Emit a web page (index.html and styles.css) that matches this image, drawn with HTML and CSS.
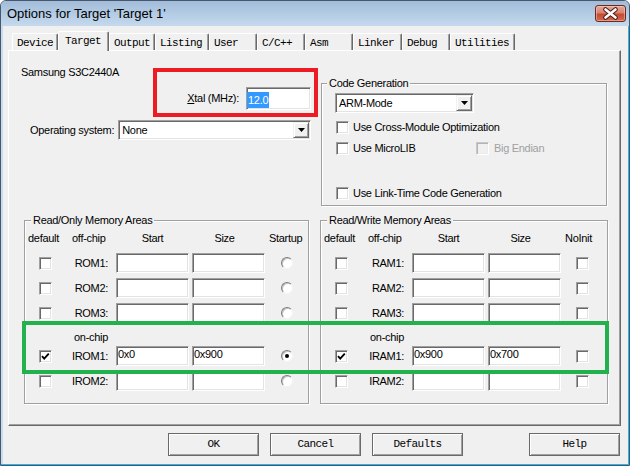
FILE: index.html
```html
<!DOCTYPE html>
<html>
<head>
<meta charset="utf-8">
<title>Options for Target</title>
<link rel="stylesheet" href="styles.css">
</head>
<body>
<div class="window">
  <div class="titlebar">
    <span class="title">Options for Target 'Target 1'</span>
    <div class="close">
      <svg width="29" height="15" viewBox="0 0 29 15">
        <path d="M9.5 3.5L19.5 11.5M19.5 3.5L9.5 11.5" stroke="#4a1a12" stroke-width="4.6" stroke-linecap="round" fill="none"/>
        <path d="M9.5 3.5L19.5 11.5M19.5 3.5L9.5 11.5" stroke="#ffffff" stroke-width="2.6" stroke-linecap="round" fill="none"/>
      </svg>
    </div>
  </div>

  <div class="tabs">
    <div class="tab w-device">Device</div>
    <div class="tab sel w-target">Target</div>
    <div class="tab w-output">Output</div>
    <div class="tab w-listing">Listing</div>
    <div class="tab w-user">User</div>
    <div class="tab w-cc">C/C++</div>
    <div class="tab w-asm">Asm</div>
    <div class="tab w-linker">Linker</div>
    <div class="tab w-debug">Debug</div>
    <div class="tab w-util">Utilities</div>
  </div>

  <div class="panel">
    <div class="top">
      <div class="left-col">
        <div class="devname">Samsung S3C2440A</div>
        <div class="xtal-row">
          <span class="xtal-lbl"><u>X</u>tal (MHz):</span>
          <div class="edit xtal"><span class="hl">12.0</span></div>
        </div>
        <div class="os-row">
          <span class="os-lbl">Operating system:</span>
          <div class="combo os">
            <span class="combo-text">None</span>
            <span class="drop"><svg width="7" height="4" viewBox="0 0 7 4"><polygon points="0,0 7,0 3.5,4" fill="#000"/></svg></span>
          </div>
        </div>
      </div>

      <fieldset class="group codegen">
        <legend>Code Generation</legend>
        <div class="cg-body">
          <div class="combo arm">
            <span class="combo-text">ARM-Mode</span>
            <span class="drop"><svg width="7" height="4" viewBox="0 0 7 4"><polygon points="0,0 7,0 3.5,4" fill="#000"/></svg></span>
          </div>
          <div class="cb-row first">
            <span class="cb"><span class="chk"></span>Use Cross-Module Optimization</span>
          </div>
          <div class="cb-row">
            <span class="cb micro"><span class="chk"></span>Use MicroLIB</span>
            <span class="cb dis"><span class="chk off"></span>Big Endian</span>
          </div>
          <div class="cb-row last">
            <span class="cb"><span class="chk"></span>Use Link-Time Code Generation</span>
          </div>
        </div>
      </fieldset>
    </div>

    <div class="mem">
      <fieldset class="group memgrp ro">
        <legend>Read/Only Memory Areas</legend>
        <div class="mem-grid">
          <div class="hd h-def">default</div>
          <div class="hd h-off">off-chip</div>
          <div class="hd h-start">Start</div>
          <div class="hd h-size">Size</div>
          <div class="hd h-last">Startup</div>

          <span class="chk cell-chk"></span>
          <div class="rlbl">ROM1:</div>
          <div class="edit mem-edit"></div>
          <div class="edit mem-edit"></div>
          <span class="radio"></span>

          <span class="chk cell-chk"></span>
          <div class="rlbl">ROM2:</div>
          <div class="edit mem-edit"></div>
          <div class="edit mem-edit"></div>
          <span class="radio"></span>

          <span class="chk cell-chk"></span>
          <div class="rlbl">ROM3:</div>
          <div class="edit mem-edit"></div>
          <div class="edit mem-edit"></div>
          <span class="radio"></span>

          <div class="onchip">on-chip</div>

          <span class="chk cell-chk"><svg width="11" height="11" viewBox="0 0 11 11"><path d="M2 5.2L4.2 7.6L8.8 2.6" stroke="#000" stroke-width="1.8" fill="none"/></svg></span>
          <div class="rlbl">IROM1:</div>
          <div class="edit mem-edit">0x0</div>
          <div class="edit mem-edit">0x900</div>
          <span class="radio on"></span>

          <span class="chk cell-chk"></span>
          <div class="rlbl">IROM2:</div>
          <div class="edit mem-edit"></div>
          <div class="edit mem-edit"></div>
          <span class="radio"></span>
        </div>
      </fieldset>

      <fieldset class="group memgrp rw">
        <legend>Read/Write Memory Areas</legend>
        <div class="mem-grid">
          <div class="hd h-def">default</div>
          <div class="hd h-off">off-chip</div>
          <div class="hd h-start">Start</div>
          <div class="hd h-size">Size</div>
          <div class="hd h-last">NoInit</div>

          <span class="chk cell-chk"></span>
          <div class="rlbl">RAM1:</div>
          <div class="edit mem-edit"></div>
          <div class="edit mem-edit"></div>
          <span class="chk cell-noinit"></span>

          <span class="chk cell-chk"></span>
          <div class="rlbl">RAM2:</div>
          <div class="edit mem-edit"></div>
          <div class="edit mem-edit"></div>
          <span class="chk cell-noinit"></span>

          <span class="chk cell-chk"></span>
          <div class="rlbl">RAM3:</div>
          <div class="edit mem-edit"></div>
          <div class="edit mem-edit"></div>
          <span class="chk cell-noinit"></span>

          <div class="onchip">on-chip</div>

          <span class="chk cell-chk"><svg width="11" height="11" viewBox="0 0 11 11"><path d="M2 5.2L4.2 7.6L8.8 2.6" stroke="#000" stroke-width="1.8" fill="none"/></svg></span>
          <div class="rlbl">IRAM1:</div>
          <div class="edit mem-edit">0x900</div>
          <div class="edit mem-edit">0x700</div>
          <span class="chk cell-noinit"></span>

          <span class="chk cell-chk"></span>
          <div class="rlbl">IRAM2:</div>
          <div class="edit mem-edit"></div>
          <div class="edit mem-edit"></div>
          <span class="chk cell-noinit"></span>
        </div>
      </fieldset>
    </div>
  </div>

  <div class="buttons">
    <div class="btn">OK</div>
    <div class="btn">Cancel</div>
    <div class="btn">Defaults</div>
    <div class="btn help">Help</div>
  </div>

  <div class="mark mark-red"></div>
  <div class="mark mark-green"></div>
</div>
</body>
</html>
```

FILE: styles.css
```css
html, body {
  margin: 0;
  padding: 0;
  background: #ffffff;
}

.window {
  position: relative;
  width: 630px;
  height: 466px;
  box-sizing: border-box;
  border: 1px solid #45586d;
  border-radius: 6px 6px 0 0;
  background: #f0f0f0;
  box-shadow: inset -1px -1px 0 #2cb4ec, inset 2px 0 0 #cddcec;
  overflow: hidden;
  font-family: "Liberation Sans", Arial, sans-serif;
  font-size: 11px;
  letter-spacing: -0.3px;
  line-height: 13px;
  color: #000;
}

/* ---------- title bar ---------- */
.titlebar {
  height: 25px;
  display: flex;
  align-items: center;
  background: linear-gradient(to bottom, #a2bcd9 0%, #b3cbe4 50%, #c5d9ed 100%);
  border-radius: 5px 5px 0 0;
}
.title {
  padding-left: 6px;
  font-size: 13px;
  letter-spacing: 0;
  line-height: 16px;
  color: #000;
}
.close {
  margin-left: auto;
  margin-right: 3px;
  align-self: flex-start;
  margin-top: 4px;
  width: 29px;
  height: 15px;
  border: 1px solid #6b2a20;
  border-radius: 3px;
  background: linear-gradient(to bottom, #e6a79a 0%, #d9836f 45%, #c44a33 55%, #cf6a4e 100%);
  box-shadow: inset 0 0 0 1px rgba(255, 220, 210, 0.45);
  display: flex;
}

/* ---------- tabs ---------- */
.tabs {
  display: flex;
  align-items: flex-end;
  height: 19px;
  margin-top: 5px;
  margin-left: 11px;
  font-family: "Liberation Mono", "DejaVu Sans Mono", monospace;
  font-size: 11px;
  letter-spacing: -0.6px;
}
.tab {
  box-sizing: border-box;
  height: 17px;
  padding: 3px 0 0 4px;
  border-top: 1px solid #ffffff;
  border-left: 1px solid #ffffff;
  border-right: 1px solid #696969;
  box-shadow: inset -1px 0 0 #a0a0a0;
  border-radius: 2px 2px 0 0;
  background: #f0f0f0;
  white-space: pre;
  line-height: 13px;
}
.tab.sel {
  height: 20px;
  margin-bottom: -1px;
  padding-left: 6px;
  position: relative;
  z-index: 1;
}
.w-device { width: 46px; }
.w-target { width: 51px; }
.w-output { width: 46px; }
.w-listing { width: 54px; }
.w-user { width: 48px; }
.w-cc { width: 48px; }
.w-asm { width: 48px; }
.w-linker { width: 49px; }
.w-debug { width: 48px; }
.w-util { width: 65px; }

/* ---------- panel ---------- */
.panel {
  box-sizing: border-box;
  width: 613px;
  height: 376px;
  margin-left: 7px;
  border-top: 1px solid #ffffff;
  border-left: 1px solid #ffffff;
  border-right: 1px solid #696969;
  border-bottom: 1px solid #696969;
  box-shadow: inset -1px -1px 0 #a0a0a0;
}

.top {
  display: flex;
  align-items: flex-start;
}
.left-col {
  width: 312px;
  flex: none;
  display: flex;
  flex-direction: column;
}
.devname {
  margin: 15px 0 0 12px;
}
.xtal-row {
  display: flex;
  align-items: center;
  justify-content: flex-end;
  margin-top: 8px;
  padding-right: 10px;
}
.xtal-lbl {
  margin-right: 7px;
}
.xtal-lbl u {
  text-decoration: underline;
}
.os-row {
  display: flex;
  align-items: center;
  margin-top: 10px;
  padding-left: 21px;
  padding-right: 10px;
}
.os-lbl {
  margin-right: 4px;
}

/* edit box */
.edit {
  box-sizing: border-box;
  height: 20px;
  background: #ffffff;
  border: 1px solid;
  border-color: #a0a0a0 #ffffff #ffffff #a0a0a0;
  box-shadow: inset 1px 1px 0 #696969, inset -1px -1px 0 #e3e3e3;
  padding: 0 0 0 1px;
  line-height: 14px;
  white-space: nowrap;
}
.edit.xtal {
  width: 65px;
  height: 23px;
  padding: 4px 0 0 0;
}
.hl {
  display: inline-block;
  height: 16px;
  line-height: 16px;
  padding: 0 1px;
  background: #3399ff;
  color: #ffffff;
}

/* combo box */
.combo {
  box-sizing: border-box;
  height: 20px;
  display: flex;
  align-items: stretch;
  border: 1px solid;
  border-color: #a0a0a0 #ffffff #ffffff #a0a0a0;
  box-shadow: inset 1px 1px 0 #696969, inset -1px -1px 0 #e3e3e3;
  padding: 1px;
  background: #ffffff;
}
.combo.os {
  flex: 1;
}
.combo.arm {
  width: 139px;
}
.combo-text {
  flex: 1;
  padding-left: 2px;
  line-height: 16px;
}
.drop {
  width: 16px;
  box-sizing: border-box;
  background: #f0f0f0;
  border: 1px solid;
  border-color: #f0f0f0 #696969 #696969 #f0f0f0;
  box-shadow: inset 1px 1px 0 #ffffff, inset -1px -1px 0 #a0a0a0;
  display: flex;
  align-items: center;
  justify-content: center;
}

/* group boxes */
.group {
  margin: 0;
  padding: 0;
  border: 1px solid #a0a0a0;
  box-shadow: inset 1px 1px 0 #ffffff, 1px 1px 0 #ffffff;
  min-width: 0;
}
.group legend {
  padding: 0 2px;
  margin-left: 6px;
  line-height: 13px;
  background: #f0f0f0;
}
.codegen {
  box-sizing: border-box;
  width: 286px;
  margin-top: 26px;
  flex: none;
}
.codegen legend {
  margin-left: 5px;
}
.cg-body {
  padding: 3px 0 1px 13px;
}
.cb-row {
  height: 21px;
  display: flex;
  align-items: center;
  padding-left: 1px;
}
.cb-row.first {
  margin-top: 4px;
}
.cb-row.last {
  margin-top: 24px;
}
.cb {
  display: flex;
  align-items: center;
  white-space: nowrap;
}
.cb .chk {
  margin-right: 4px;
}
.cb.micro {
  width: 140px;
}
.cb.dis {
  color: #a0a0a0;
}
.cb.dis .chk {
  margin-right: 5px;
}

.chk {
  box-sizing: border-box;
  width: 13px;
  height: 13px;
  flex: none;
  display: inline-flex;
  align-items: center;
  justify-content: center;
  background: #ffffff;
  border: 1px solid;
  border-color: #a0a0a0 #ffffff #ffffff #a0a0a0;
  box-shadow: inset 1px 1px 0 #696969, inset -1px -1px 0 #e3e3e3;
}
.chk.off {
  background: #f0f0f0;
  border-color: #c8c8c8 #ffffff #ffffff #c8c8c8;
  box-shadow: inset 1px 1px 0 #b4b4b4, inset -1px -1px 0 #ececec;
}

.radio {
  box-sizing: border-box;
  width: 12px;
  height: 12px;
  border-radius: 50%;
  border: 1px solid;
  border-color: #7c7c7c #f4f4f4 #f4f4f4 #7c7c7c;
  background: #ffffff;
  box-shadow: inset 1px 1px 0 #c4c4c4;
  display: flex;
  align-items: center;
  justify-content: center;
}
.radio.on::after {
  content: "";
  width: 4px;
  height: 4px;
  border-radius: 50%;
  background: #000;
}

/* memory areas */
.mem {
  display: flex;
  margin-top: 8px;
}
.memgrp.ro {
  box-sizing: border-box;
  width: 285px;
  margin-left: 15px;
}
.memgrp.rw {
  box-sizing: border-box;
  width: 288px;
  margin-left: 11px;
}
.mem-grid {
  display: grid;
  grid-template-columns: 43px 48px 76px 74px 1fr;
  grid-template-rows: 13px 28px 25px 25px 21px 22px 25px;
  align-items: end;
  padding: 5px 0 12px 0;
}
.hd {
  white-space: nowrap;
}
.h-def { margin-left: 3px; }
.h-off { margin-left: 4px; }
.h-start { width: 73px; text-align: center; }
.h-size { width: 65px; text-align: center; }
.h-last { margin-left: 3px; }

.cell-chk {
  margin-left: 14px;
  margin-bottom: 3px;
}
.cell-noinit {
  margin-left: 14px;
  margin-bottom: 3px;
}
.rlbl {
  text-align: right;
  padding-right: 8px;
  margin-bottom: 3px;
}
.mem-edit {
  width: 73px;
}
.radio {
  margin-left: 15px;
  margin-bottom: 4px;
}
.onchip {
  grid-column: 1 / -1;
  padding-left: 49px;
}

/* buttons */
.buttons {
  display: flex;
  margin-top: 7px;
  margin-left: 167px;
}
.btn {
  box-sizing: border-box;
  width: 91px;
  height: 23px;
  margin-right: 11px;
  border: 1px solid #6a6a6a;
  background: #f0f0f0;
  box-shadow: inset 1px 1px 0 #ffffff, inset -1px -1px 0 #a0a0a0;
  display: flex;
  align-items: center;
  justify-content: center;
  font-family: "Liberation Mono", "DejaVu Sans Mono", monospace;
  font-size: 11px;
  letter-spacing: -0.6px;
}
.btn.help {
  margin-left: 55px;
  margin-right: 0;
}

/* annotation rectangles drawn over the dialog */
.mark {
  position: absolute;
  box-sizing: border-box;
  border-style: solid;
  border-width: 4px;
  pointer-events: none;
}
.mark-red {
  left: 152px;
  top: 67px;
  width: 165px;
  height: 49px;
  border-color: #ed1c24;
}
.mark-green {
  left: 21px;
  top: 320px;
  width: 587px;
  height: 53px;
  border-color: #22b14c;
}
```
